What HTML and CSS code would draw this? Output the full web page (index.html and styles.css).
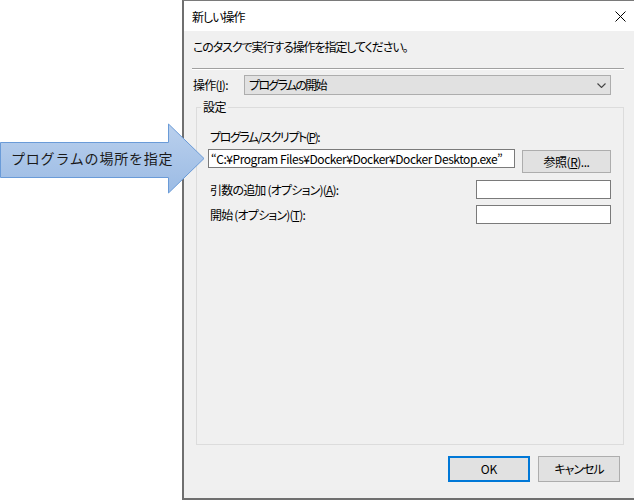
FILE: index.html
```html
<!DOCTYPE html>
<html lang="ja">
<head>
<meta charset="utf-8">
<title>新しい操作</title>
<link rel="stylesheet" href="styles.css">
</head>
<body>
<div class="screen">
  <div class="desk"></div>
  <div class="dialog">
    <div class="titlebar">
      <span class="title">新しい操作</span>
      <svg class="close" width="11" height="11" viewBox="0 0 11 11"><path d="M0.5 0.5 L10.5 10.5 M10.5 0.5 L0.5 10.5" stroke="#000" stroke-width="1" fill="none"/></svg>
    </div>
    <div class="content">
      <p class="intro">このタスクで実行する操作を指定してください。</p>
      <div class="sep"></div>
      <div class="action-row">
        <span class="action-label">操作(<u>I</u>):</span>
        <div class="select">
          <span class="select-text">プログラムの開始</span>
          <svg class="chev" width="9" height="5" viewBox="0 0 9 5"><path d="M0.5 0.5 L4.5 4.5 L8.5 0.5" stroke="#444" stroke-width="1.1" fill="none"/></svg>
        </div>
      </div>
      <fieldset class="group">
        <legend>設定</legend>
        <div class="field-label">プログラム/スクリプト(<u>P</u>):</div>
        <div class="prog-row">
          <div class="input prog">“C:¥Program Files¥Docker¥Docker¥Docker Desktop.exe”</div>
          <button class="btn browse">参照(<u>R</u>)...</button>
        </div>
        <div class="opt-row args">
          <span class="opt-label">引数の追加 (オプション)(<u>A</u>):</span>
          <div class="input small"></div>
        </div>
        <div class="opt-row start">
          <span class="opt-label">開始 (オプション)(<u>T</u>):</span>
          <div class="input small"></div>
        </div>
      </fieldset>
      <div class="buttons">
        <button class="btn ok">OK</button>
        <button class="btn cancel">キャンセル</button>
      </div>
    </div>
  </div>
  <div class="callout">
    <svg class="callout-shape" width="206" height="80" viewBox="0 0 206 80">
      <defs>
        <linearGradient id="cg" x1="0" y1="0" x2="0" y2="1">
          <stop offset="0" stop-color="#bad0ed"/>
          <stop offset="1" stop-color="#9bbbe4"/>
        </linearGradient>
      </defs>
      <polygon points="0.5,22.5 168.5,22.5 168.5,4 204,38.5 168.5,73 168.5,57.5 0.5,57.5" fill="url(#cg)" stroke="#6a9bd8" stroke-width="1"/>
    </svg>
    <span class="callout-text">プログラムの場所を指定</span>
  </div>
</div>
</body>
</html>
```

FILE: styles.css
```css
* { box-sizing: border-box; }

html, body {
  margin: 0;
  padding: 0;
  background: #fff;
}

body {
  font-family: "Noto Sans CJK JP", "Noto Sans", sans-serif;
  font-size: 12px;
  color: #000;
  font-feature-settings: "palt";
}

.screen {
  position: relative;
  display: flex;
  width: 634px;
  height: 500px;
  overflow: hidden;
}

.desk {
  flex: none;
  width: 182px;
  background: #fff;
}

.dialog {
  flex: 1;
  display: flex;
  flex-direction: column;
  border-left: 2px solid #6f6f6f;
  border-top: 1px solid #7a7a7a;
  border-bottom: 2px solid #6f6f6f;
}

.titlebar {
  flex: none;
  height: 30px;
  background: #fff;
  display: flex;
  align-items: center;
  justify-content: space-between;
  padding: 0 8px 0 8px;
}

.title {
  line-height: 16px;
  padding-top: 1px;
  letter-spacing: -1px;
}

.close {
  display: block;
}

.content {
  flex: 1;
  background: #f0f0f0;
  display: flex;
  flex-direction: column;
}

.intro {
  margin: 8px 0 0 9px;
  line-height: 16px;
  letter-spacing: -1.1px;
}

.sep {
  margin: 13px 10px 0 8px;
  height: 2px;
  border-top: 1px solid #a0a0a0;
  border-bottom: 1px solid #fff;
}

.action-row {
  margin: 5px 23px 0 9px;
  height: 20px;
  display: flex;
  align-items: center;
}

.action-label {
  width: 51px;
  line-height: 16px;
  letter-spacing: -0.7px;
}

.select {
  flex: 1;
  height: 20px;
  border: 1px solid #adadad;
  background: #e1e1e1;
  display: flex;
  align-items: center;
  justify-content: space-between;
  padding: 0 4px 0 4px;
  line-height: 16px;
}

.select-text {
  letter-spacing: -1.7px;
}

.chev {
  display: block;
}

.group {
  flex: 1;
  margin: 5px 10px 0 12px;
  padding: 0 12px 0 11px;
  border: 1px solid #dcdcdc;
  min-width: 0;
}

.group legend {
  margin-left: -7px;
  padding: 0 2px;
  line-height: 14px;
  letter-spacing: -0.5px;
}

.field-label {
  margin-top: 15px;
  padding-left: 2px;
  line-height: 16px;
  letter-spacing: -1.4px;
}

.prog-row {
  margin-top: 4px;
  display: flex;
  align-items: flex-start;
  gap: 7px;
}

.input {
  height: 19px;
  border: 1px solid #7a7a7a;
  background: #fff;
}

.prog {
  width: 307px;
  padding: 0 2px;
  line-height: 17px;
  white-space: nowrap;
  overflow: hidden;
  letter-spacing: -0.45px;
}

.btn {
  font: inherit;
  color: #000;
  background: #e1e1e1;
  border: 1px solid #adadad;
  padding: 0;
  margin: 0;
  line-height: 16px;
}

.browse {
  margin-top: 1px;
  width: 89px;
  height: 23px;
  letter-spacing: -0.5px;
}

.opt-row {
  display: flex;
  align-items: center;
  justify-content: space-between;
}

.opt-row.args { margin-top: 7px; }
.opt-row.start { margin-top: 6px; }

.opt-label {
  padding-left: 2px;
  line-height: 16px;
  letter-spacing: -0.8px;
}

.small {
  width: 135px;
}

.buttons {
  flex: none;
  margin: 11px 14px 16px 0;
  display: flex;
  justify-content: flex-end;
  gap: 8px;
}

.buttons .btn {
  width: 82px;
  height: 26px;
}

.buttons .ok {
  border: 2px solid #0078d7;
}

.buttons .cancel {
  letter-spacing: -1px;
}

.callout {
  position: absolute;
  left: 0;
  top: 120px;
  width: 206px;
  height: 80px;
}

.callout-shape {
  position: absolute;
  left: 0;
  top: 0;
}

.callout-text {
  position: absolute;
  left: 11px;
  top: 28px;
  font-size: 14px;
  line-height: 20px;
  letter-spacing: 0.8px;
  font-feature-settings: normal;
  color: #1a1a1a;
}
```
